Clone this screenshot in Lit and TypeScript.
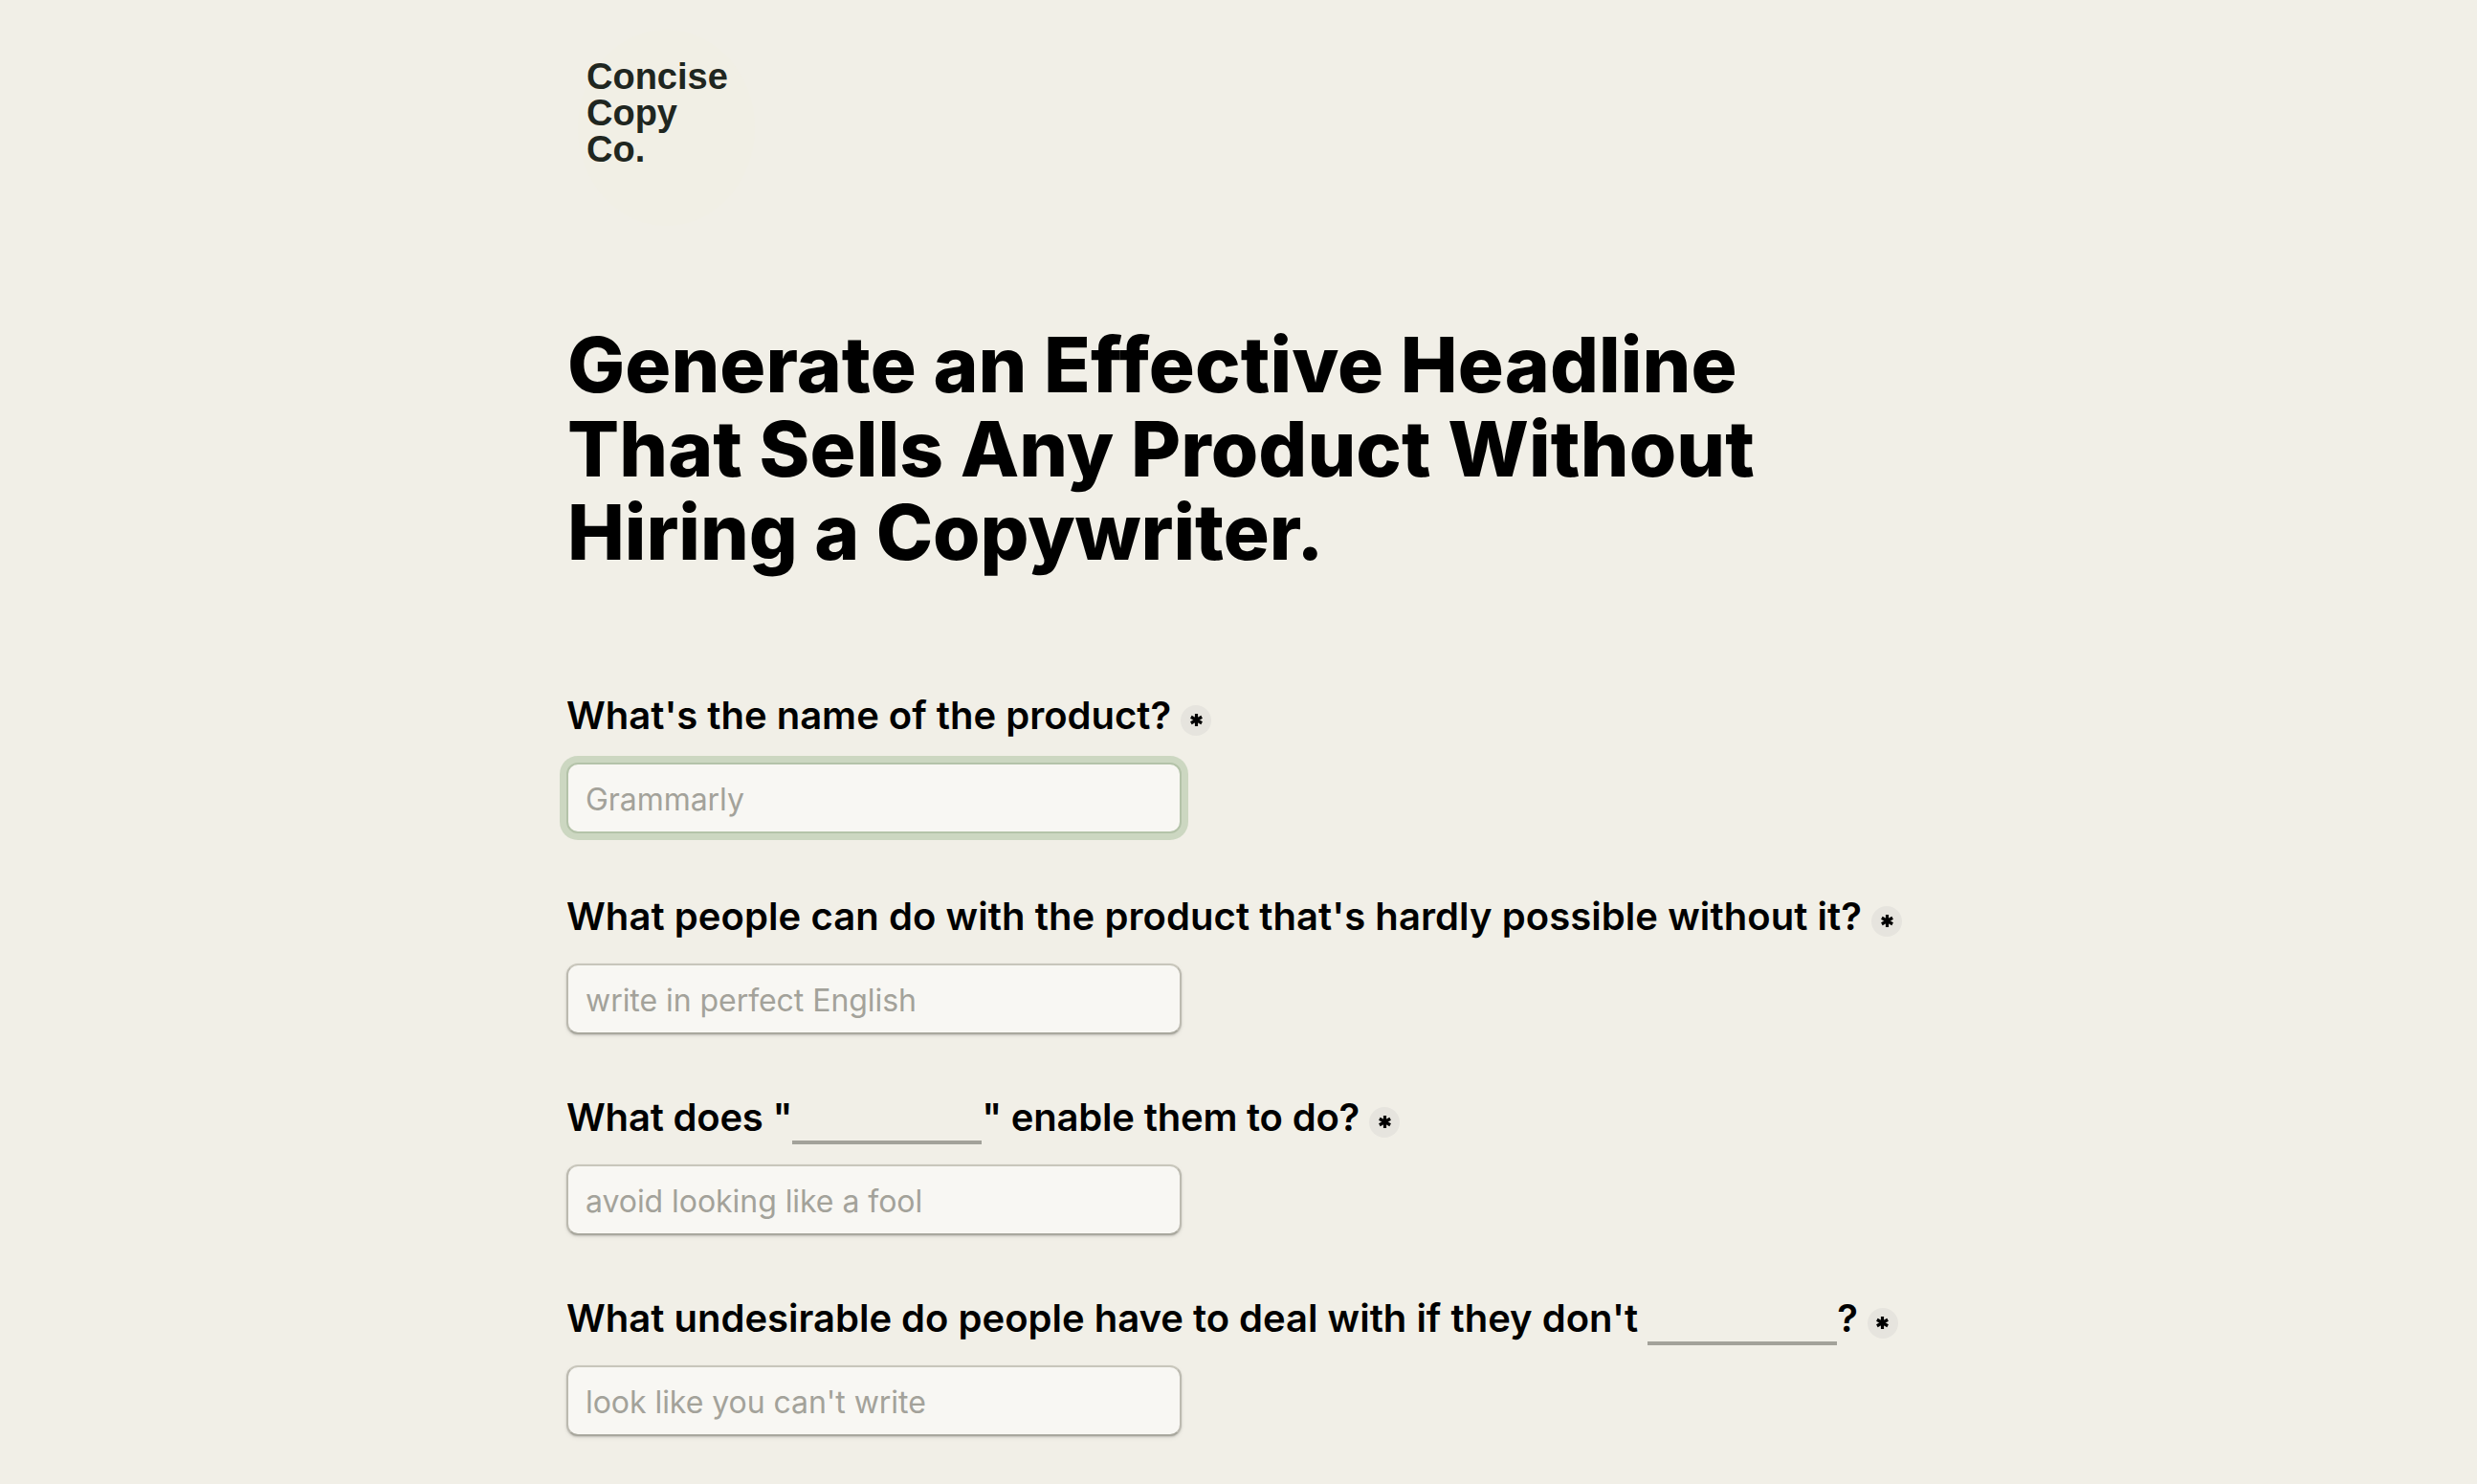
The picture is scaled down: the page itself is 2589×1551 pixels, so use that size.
import { LitElement, html, css } from "lit";
import { customElement } from "lit/decorators.js";

const fields = [
  { label: html`What's the name of the product?`, ph: "Grammarly", focus: true, ls: 0 },
  { label: html`What people can do with the product that's hardly possible without it?`, ph: "write in perfect English", ls: 0.07 },
  { label: html`What does "<span class="blank"></span>" enable them to do?`, ph: "avoid looking like a fool", ls: -0.2 },
  { label: html`What undesirable do people have to deal with if they don't <span class="blank"></span>?`, ph: "look like you can't write", ls: 0 },
];

@customElement("app-root")
export class AppRoot extends LitElement {
  static styles = css`
    :host { display: block; height: 1551px; overflow: hidden; background: #f1efe7; font-family: Inter, sans-serif; color: #000; }
    .main { width: 1405px; margin: 0 auto; padding-top: 61px; display: flex; flex-direction: column; }
    .logo { position: relative; padding-left: 21px; font: 700 38px/38px "Liberation Sans", sans-serif; color: #1f2620; height: 114px; }
    .logo::before { content: ""; position: absolute; left: 12px; top: -30px; width: 185px; height: 205px; border-radius: 50%; background: #f1efe5; }
    .logo span { position: relative; display: block; }
    h1 { margin: 162px 0 120.5px; font-size: 80px; line-height: 87.5px; font-weight: 800; letter-spacing: 0.1px; padding-left: 1px; font-variant-ligatures: none; font-feature-settings: "liga" 0, "calt" 0, "dlig" 0; }
    h1 .tight { letter-spacing: -0.05px; }
    form { display: flex; flex-direction: column; gap: 59px; }
    .field { display: flex; flex-direction: column; gap: 21px; align-items: flex-start; }
    label { display: flex; align-items: center; gap: 10px; font-size: 40px; line-height: 56px; font-weight: 600; white-space: pre; }
    .text { white-space: pre; }
    .blank { display: inline-block; width: 198px; height: 4px; background: #a3a29a; vertical-align: -14px; }
    .badge { width: 32px; height: 32px; border-radius: 50%; background: #e6e4de; display: flex; align-items: center; justify-content: center; margin-top: 9px; }
    .badge svg { width: 13px; height: 13px; display: block; }
    input { box-sizing: border-box; width: 643px; height: 74px; padding: 2px 18px 0; border: 2px solid #bcbab0; border-top-color: #c8c6bb; border-bottom-color: #a9a89e; border-radius: 12px; background: #f8f7f3; font: 400 32px Inter, sans-serif; letter-spacing: -0.05px; color: #000; outline: none; box-shadow: 0 1px 2px rgba(0,0,0,.15), 0 2px 5px rgba(0,0,0,.06); }
    input::placeholder { color: #a3a29a; opacity: 1; }
    input.focus { border-color: #b4c3a9; box-shadow: 0 0 0 7px #ccd7c1; }
  `;
  render() {
    return html`<div class="main">
      <div class="logo"><span>Concise</span><span>Copy</span><span>Co.</span></div>
      <h1>Generate an Effective Headline<br />That Sells Any Product Without<br /><span class="tight">Hiring a Copywriter.</span></h1>
      <form>
        ${fields.map(
          (f) => html`<div class="field">
            <label><span class="text" style="letter-spacing:${f.ls}px">${f.label}</span><span class="badge"><svg viewBox="0 0 18 18"><path d="M9 0v18M1.2 4.5l15.6 9M16.8 4.5l-15.6 9" stroke="#000" stroke-width="4.4" fill="none"/></svg></span></label>
            <input class=${f.focus ? "focus" : ""} placeholder=${f.ph} />
          </div>`
        )}
      </form>
    </div>`;
  }
}
